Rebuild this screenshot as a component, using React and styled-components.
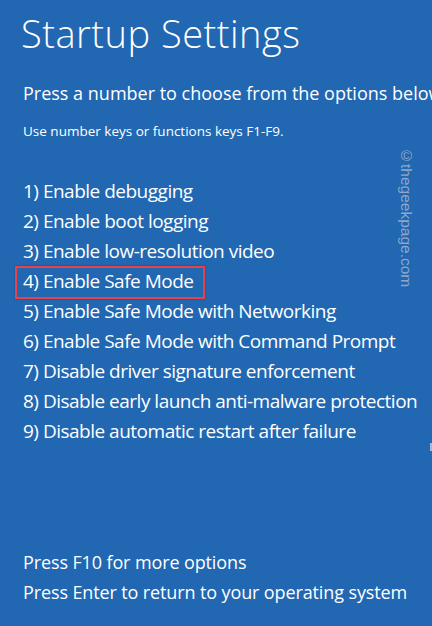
import React from "react";
import styled, { createGlobalStyle } from "styled-components";

const Global = createGlobalStyle`
  html, body { margin: 0; padding: 0; background: #2167b2; }
  body { font-family: "Open Sans", "Noto Sans", "Liberation Sans", sans-serif; color: #ffffff; }
`;

const Screen = styled.div`
  position: relative;
  width: 432px;
  height: 626px;
  overflow: hidden;
  background: #2167b2;
  box-sizing: border-box;
  padding: 0 0 0 23px;
  display: flex;
  flex-direction: column;
`;

const Title = styled.h1`
  margin: 8px 0 0 -2px;
  font-weight: 300;
  font-size: 38px;
  line-height: 50px;
  letter-spacing: 0.5px;
  white-space: nowrap;
`;

const Lead = styled.p`
  margin: 22px 0 0 0;
  font-size: 18px;
  font-weight: 400;
  line-height: 26px;
  white-space: nowrap;
`;

const Hint = styled.p`
  margin: 15px 0 0 0;
  font-size: 13.5px;
  line-height: 20px;
  white-space: nowrap;
`;

const Options = styled.ol`
  list-style: none;
  margin: 35px 0 0 0;
  padding: 0;
  display: flex;
  flex-direction: column;
`;

const Option = styled.li`
  position: relative;
  font-size: 19px;
  line-height: 30px;
  letter-spacing: -0.5px;
  white-space: nowrap;
`;

const Highlight = styled.span`
  position: absolute;
  left: -8px;
  top: 0;
  width: 190px;
  height: 33px;
  box-sizing: border-box;
  border: 2px solid #e9414a;
  box-shadow: 0 0 2px rgba(0, 0, 0, 0.25);
  pointer-events: none;
`;

const Footer = styled.div`
  margin-top: auto;
  margin-bottom: 19px;
  display: flex;
  flex-direction: column;
`;

const FooterLine = styled.p`
  margin: 0;
  font-size: 18px;
  line-height: 30px;
  letter-spacing: -0.12px;
  white-space: nowrap;
`;

const Watermark = styled.span`
  position: absolute;
  left: 397px;
  top: 147px;
  writing-mode: vertical-rl;
  font-family: "Liberation Sans", Arial, sans-serif;
  font-size: 15.5px;
  color: #8fa8c9;
  white-space: nowrap;
`;

const EdgeMark = styled.span`
  position: absolute;
  right: 0;
  top: 443px;
  width: 2px;
  height: 8px;
  background: #a9b9cf;
`;

const options = [
  "1) Enable debugging",
  "2) Enable boot logging",
  "3) Enable low-resolution video",
  "4) Enable Safe Mode",
  "5) Enable Safe Mode with Networking",
  "6) Enable Safe Mode with Command Prompt",
  "7) Disable driver signature enforcement",
  "8) Disable early launch anti-malware protection",
  "9) Disable automatic restart after failure",
];

export default function App() {
  return (
    <>
      <Global />
      <Screen>
        <Title>Startup Settings</Title>
        <Lead>Press a number to choose from the options below:</Lead>
        <Hint>Use number keys or functions keys F1-F9.</Hint>
        <Options>
          {options.map((o, i) => (
            <Option key={o}>
              {i === 3 && <Highlight />}
              {o}
            </Option>
          ))}
        </Options>
        <Footer>
          <FooterLine>Press F10 for more options</FooterLine>
          <FooterLine>Press Enter to return to your operating system</FooterLine>
        </Footer>
        <Watermark>©thegeekpage.com</Watermark>
        <EdgeMark />
      </Screen>
    </>
  );
}
